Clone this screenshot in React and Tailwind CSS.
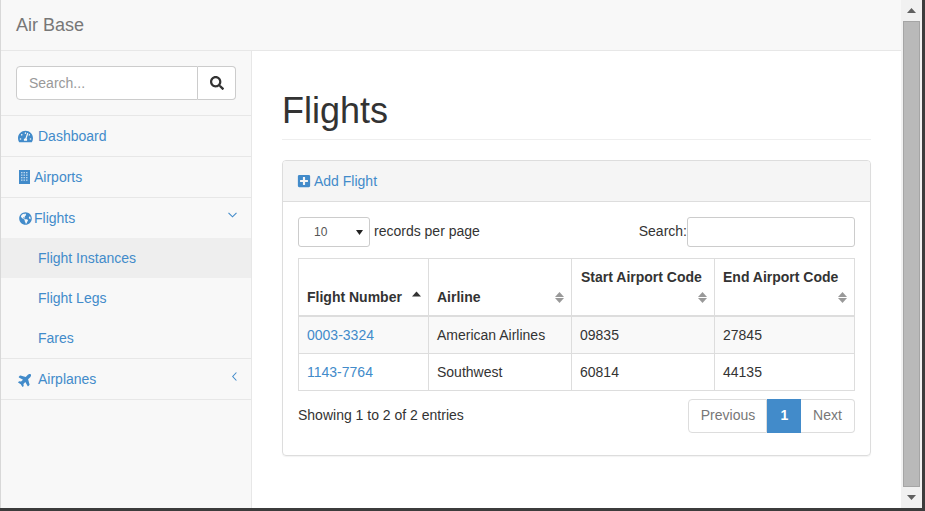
import React from "react";
import { FaTachometerAlt, FaGlobeAmericas, FaPlane, FaPlusSquare, FaSearch } from "react-icons/fa";

function Sort({ up }) {
  return (
    <svg width="9" height="13" viewBox="0 0 9 13" className="absolute right-[7px] bottom-[11px]">
      {up ? (
        <path d="M0 5.5 L4.5 0.5 L9 5.5 Z" fill="#333" />
      ) : (
        <>
          <path d="M0 6 L4.5 1 L9 6 Z" fill="#999" />
          <path d="M0 7 L4.5 12 L9 7 Z" fill="#999" />
        </>
      )}
    </svg>
  );
}

function BuildingIcon() {
  return (
    <svg width="11" height="14" viewBox="0 0 11 14">
      <rect x="0" y="0" width="11" height="14" fill="#428bca" />
      {[2, 4.5, 7, 9.5].flatMap((y) =>
        [2, 4.5, 7].map((x) => <rect key={x + "-" + y} x={x} y={y} width="1.5" height="1.3" fill="#bcd6ec" />)
      )}
    </svg>
  );
}

function NavChevron({ dir }) {
  return dir === "down" ? (
    <svg width="9" height="6" viewBox="0 0 9 6" className="-mt-[6px]">
      <path d="M0.5 0.8 L4.5 4.8 L8.5 0.8" fill="none" stroke="#428bca" strokeWidth="1.1" />
    </svg>
  ) : (
    <svg width="5" height="9" viewBox="0 0 5 9" className="-mt-[6px]">
      <path d="M4.4 0.5 L0.7 4.5 L4.4 8.5" fill="none" stroke="#428bca" strokeWidth="1.1" />
    </svg>
  );
}

export default function App() {
  const th = "relative border border-[#ddd] border-b-2 align-bottom text-left font-bold p-2 leading-[20px]";
  const td = "border border-[#ddd] px-2 pt-[2px]";
  return (
    <div className="h-[511px] w-[925px] overflow-hidden bg-[#3c3c3c] flex flex-col text-[14px] text-[#333] font-['Liberation_Sans',Arial,sans-serif]">
      <div className="flex h-[508px] w-[922px]">
        <div className="flex-1 min-w-0 bg-white border-l border-[#d8d8d8] flex flex-col">
          <header className="h-[51px] shrink-0 bg-[#f8f8f8] border-b border-[#e7e7e7] flex items-center pl-[15px] text-[18px] text-[#777]">Air Base</header>
          <div className="flex flex-1 min-h-0">
            <aside className="w-[251px] shrink-0 bg-[#f8f8f8] border-r border-[#e7e7e7]">
              <div className="h-[65px] border-b border-[#e7e7e7] px-[15px] pt-[15px]">
                <div className="flex h-[34px] w-[220px]">
                  <div className="flex-1 bg-white border border-[#ccc] rounded-l-[4px] pl-3 flex items-center text-[#999]">Search...</div>
                  <div className="w-[38px] bg-white border border-l-0 border-[#ccc] rounded-r-[4px] flex items-center justify-center text-[#333]">
                    <FaSearch size={14} />
                  </div>
                </div>
              </div>
              <div className="h-[41px] border-b border-[#e7e7e7] flex items-center pl-[17px] text-[#428bca] gap-[5px]">
                <FaTachometerAlt size={15} /><span>Dashboard</span>
              </div>
              <div className="h-[41px] border-b border-[#e7e7e7] flex items-center pl-[18px] text-[#428bca] gap-[4px]">
                <BuildingIcon /><span>Airports</span>
              </div>
              <div className="border-b border-[#e7e7e7]">
                <div className="h-[40px] flex items-center pl-[18px] pr-[14px] text-[#428bca] justify-between">
                  <span className="flex items-center gap-[2px]"><FaGlobeAmericas size={13} /><span>Flights</span></span>
                  <NavChevron dir="down" />
                </div>
                <div className="h-[40px] bg-[#eee] flex items-center pl-[37px] text-[#428bca]">Flight Instances</div>
                <div className="h-[40px] flex items-center pl-[37px] text-[#428bca]">Flight Legs</div>
                <div className="h-[40px] flex items-center pl-[37px] text-[#428bca]">Fares</div>
              </div>
              <div className="h-[41px] border-b border-[#e7e7e7] flex items-center justify-between pl-[17px] pr-[14px] text-[#428bca]">
                <span className="flex items-center gap-[5px]"><FaPlane size={15} className="-rotate-45" /><span>Airplanes</span></span>
                <NavChevron dir="left" />
              </div>
            </aside>
            <main className="flex-1 min-w-0 pl-[30px] pr-[30px]">
              <h1 className="mt-[40px] h-[49px] text-[36px] leading-[40px] font-normal text-[#333] border-b border-[#eee]">Flights</h1>
              <section className="mt-[20px] h-[296px] border border-[#ddd] rounded-[4px] shadow-[0_1px_1px_rgba(0,0,0,0.05)]">
                <div className="h-[41px] bg-[#f5f5f5] border-b border-[#ddd] rounded-t-[3px] flex items-center pl-[14px] text-[#428bca] gap-[3px]">
                  <FaPlusSquare size={14} /><span>Add Flight</span>
                </div>
                <div className="px-[15px] pt-[15px]">
                  <div className="flex items-center justify-between h-[30px]">
                    <div className="flex items-center gap-1">
                      <div className="w-[72px] h-[30px] border border-[#ccc] rounded-[3px] flex items-center justify-between pl-[15px] pr-[6px] text-[12px] text-[#555]">
                        <span>10</span>
                        <svg width="7" height="5" viewBox="0 0 7 5"><path d="M0 0H7L3.5 5Z" fill="#222" /></svg>
                      </div>
                      <span className="mb-[2px]">records per page</span>
                    </div>
                    <div className="flex items-center">
                      <span className="mb-[2px]">Search:</span>
                      <div className="w-[168px] h-[30px] border border-[#ccc] rounded-[3px] bg-white" />
                    </div>
                  </div>
                  <table className="mt-[11px] border-collapse table-fixed w-[556px]">
                    <colgroup>
                      <col className="w-[130px]" />
                      <col className="w-[143px]" />
                      <col className="w-[143px]" />
                      <col className="w-[140px]" />
                    </colgroup>
                    <thead>
                      <tr className="h-[57px]">
                        <th className={th}>Flight Number<Sort up /></th>
                        <th className={th}>Airline<Sort /></th>
                        <th className={th + " pb-[28px] pl-[9px]"}>Start Airport Code<Sort /></th>
                        <th className={th + " pb-[28px]"}>End Airport Code<Sort /></th>
                      </tr>
                    </thead>
                    <tbody>
                      <tr className="bg-[#f9f9f9] h-[37px]">
                        <td className={td + " text-[#428bca]"}>0003-3324</td>
                        <td className={td}>American Airlines</td>
                        <td className={td}>09835</td>
                        <td className={td}>27845</td>
                      </tr>
                      <tr className="h-[37px]">
                        <td className={td + " text-[#428bca]"}>1143-7764</td>
                        <td className={td}>Southwest</td>
                        <td className={td}>60814</td>
                        <td className={td}>44135</td>
                      </tr>
                    </tbody>
                  </table>
                  <div className="flex justify-between mt-[8px]">
                    <div className="pt-[8px] leading-[17px]">Showing 1 to 2 of 2 entries</div>
                    <div className="flex h-[34px]">
                      <div className="w-[79px] border border-[#ddd] rounded-l-[4px] flex items-center justify-center pl-px text-[#777]">Previous</div>
                      <div className="w-[34px] bg-[#428bca] text-white font-bold flex items-center justify-center pl-px">1</div>
                      <div className="w-[54px] border border-l-0 border-[#ddd] rounded-r-[4px] flex items-center justify-center text-[#777]">Next</div>
                    </div>
                  </div>
                </div>
              </section>
            </main>
          </div>
        </div>
        <div className="w-[21px] shrink-0 bg-[#f1f1f1] flex flex-col items-center">
          <div className="h-[21px] shrink-0 flex items-center justify-center">
            <svg width="9" height="5" viewBox="0 0 9 5"><path d="M0 5H9L4.5 0Z" fill="#606060" /></svg>
          </div>
          <div className="flex-1 w-[17px] bg-[#b9b9b9] border border-[#a5a5a5]" />
          <div className="h-[21px] shrink-0 flex items-center justify-center">
            <svg width="9" height="5" viewBox="0 0 9 5"><path d="M0 0H9L4.5 5Z" fill="#606060" /></svg>
          </div>
        </div>
      </div>
    </div>
  );
}
